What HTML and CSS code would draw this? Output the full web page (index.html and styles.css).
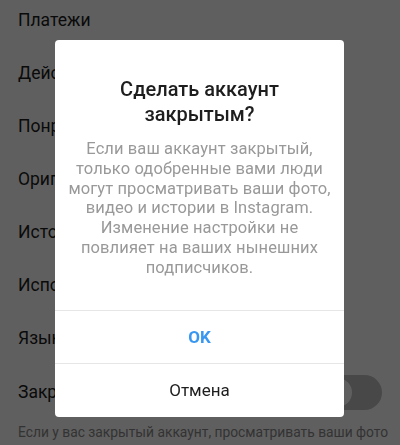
FILE: index.html
```html
<!DOCTYPE html>
<html lang="ru">
<head>
    <meta charset="UTF-8">
    <meta name="viewport" content="width=device-width, initial-scale=1.0">
    <title>Конфиденциальность</title>
    <link rel="stylesheet" href="styles.css">
</head>
<body>
    <div id="settings">
        <div class="item">Платежи</div>
        <div class="item">Действия в аккаунте</div>
        <div class="item">Понравившиеся вам публикации</div>
        <div class="item">Оригинальные фото</div>
        <div class="item">История поиска</div>
        <div class="item">Использование данных</div>
        <div class="item">Язык</div>
        <div class="item">
            <span>Закрытый аккаунт</span>
            <span class="switch"><span class="knob"></span></span>
        </div>
        <p class="hint">Если у вас закрытый аккаунт, просматривать ваши фото</p>
    </div>

    <div id="overlay">
        <div class="dialog">
            <div class="dialog-body">
                <h2>Сделать аккаунт<br>закрытым?</h2>
                <p>Если ваш аккаунт закрытый,<br>только одобренные вами люди<br>могут просматривать ваши фото,<br>видео и истории в Instagram.<br>Изменение настройки не<br>повлияет на ваших нынешних<br>подписчиков.</p>
            </div>
            <button class="btn btn-ok">OK</button>
            <button class="btn">Отмена</button>
        </div>
    </div>
</body>
</html>
```

FILE: styles.css
```css
body {
    margin: 0;
    background: #fff;
    font-family: Roboto, "Noto Sans", sans-serif;
    color: #1c1c1c;
    overflow: hidden;
}
#settings {
    margin-top: -7px;
}
.item {
    height: 53.15px;
    display: flex;
    align-items: center;
    justify-content: space-between;
    padding: 0 18px;
    font-size: 17.5px;
    white-space: nowrap;
}
.switch {
    width: 62px;
    height: 35px;
    margin-top: 2px;
    border-radius: 18px;
    background: #c2c2c2;
    position: relative;
}
.knob {
    position: absolute;
    left: 3px;
    top: 3px;
    width: 29px;
    height: 29px;
    border-radius: 50%;
    background: #fff;
}
.hint {
    margin: 4px 0 0;
    padding: 0 18px;
    font-size: 13.8px;
    line-height: 20px;
    color: #8a8a8a;
    white-space: nowrap;
}
#overlay {
    position: fixed;
    inset: 0;
    background: rgba(0, 0, 0, 0.627);
}
.dialog {
    position: absolute;
    left: 55px;
    top: 40px;
    width: 289px;
    height: 377px;
    background: #fff;
    border-radius: 4px;
    display: flex;
    flex-direction: column;
    overflow: hidden;
}
.dialog-body {
    padding: 37px 0 0;
    height: 270px;
    box-sizing: border-box;
    text-align: center;
    white-space: nowrap;
}
.dialog-body h2 {
    margin: 0 0 12px;
    font-size: 20px;
    font-weight: 500;
    line-height: 25px;
    color: #1e1e1e;
}
.dialog-body p {
    margin: 0;
    font-size: 16.5px;
    line-height: 19.8px;
    letter-spacing: 0.1px;
    color: #999;
}
.btn {
    height: 53px;
    border: 0;
    border-top: 1px solid #e6e6e6;
    background: none;
    font-family: inherit;
    font-size: 17px;
    color: #1e1e1e;
    flex-shrink: 0;
}
.btn-ok {
    color: #3897f0;
    font-weight: 700;
}
```
